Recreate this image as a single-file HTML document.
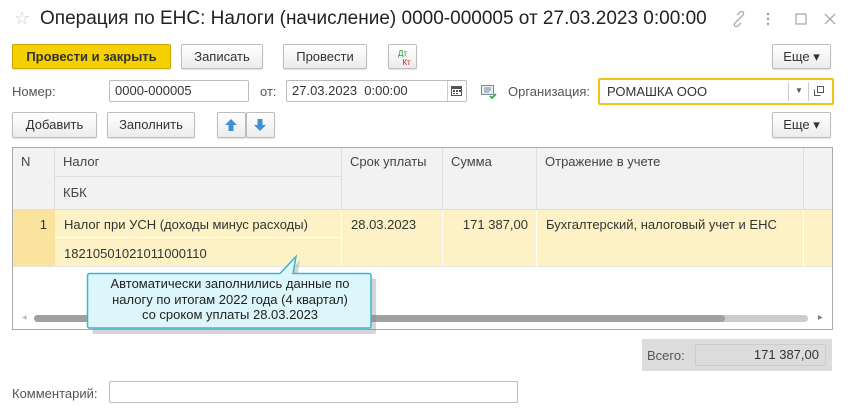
<!DOCTYPE html>
<html><head><meta charset="utf-8"><style>
*{box-sizing:border-box;margin:0;padding:0}
body{width:850px;height:413px;background:#fff;font-family:"Liberation Sans",Arial,sans-serif;font-size:13px;color:#333;position:relative;overflow:hidden}
.a{position:absolute}
.btn{position:absolute;height:25px;border:1px solid #bdbdbd;border-radius:2px;background:linear-gradient(#fff,#ececec);text-align:center;line-height:23px;color:#333;box-shadow:0 1px 1px rgba(0,0,0,.12)}
.inp{position:absolute;border:1px solid #bcbcbc;border-radius:2px;background:#fff;padding-left:5px;line-height:20px;color:#333}
.lbl{position:absolute;color:#555}
.th{position:absolute;background:#f2f2f2;color:#444;padding:6px 8px;border-right:1px solid #ddd}
</style></head><body>
<div class="a" style="left:14px;top:8px;font-size:18px;color:#ccc">☆</div>
<div class="a" style="left:40px;top:8px;font-size:19px;color:#222">Операция по ЕНС: Налоги (начисление) 0000-000005 от 27.03.2023 0:00:00</div>
<svg class="a" style="left:730px;top:11px" width="110" height="16"><g stroke="#aaa" fill="none" stroke-width="1.3"><path d="M8 9l-3 3a2 2 0 0 0 3 3l3-3M10 7l3-3a2 2 0 0 0-3-3l-3 3M7 10l4-4"/><rect x="66" y="3" width="10" height="10"/><path d="M95 3l10 10M105 3l-10 10"/></g><g fill="#999"><circle cx="38" cy="3" r="1.2"/><circle cx="38" cy="8" r="1.2"/><circle cx="38" cy="13" r="1.2"/></g></svg>

<div class="btn" style="left:12px;top:44px;width:159px;background:#f5d000;border-color:#c9a900;font-weight:bold;color:#333">Провести и закрыть</div>
<div class="btn" style="left:181px;top:44px;width:82px">Записать</div>
<div class="btn" style="left:283px;top:44px;width:84px">Провести</div>
<div class="btn" style="left:388px;top:44px;width:29px;font-size:8px;line-height:9px;padding-top:4px"><span style="color:#1a9a1a">Дт</span><br><span style="color:#d22;padding-left:8px">Кт</span></div>
<div class="btn" style="left:772px;top:44px;width:59px">Еще ▾</div>

<div class="lbl" style="left:12px;top:84px">Номер:</div>
<div class="inp" style="left:109px;top:80px;width:140px;height:22px">0000-000005</div>
<div class="lbl" style="left:260px;top:84px">от:</div>
<div class="inp" style="left:286px;top:80px;width:181px;height:22px">27.03.2023&nbsp; 0:00:00</div>
<div class="a" style="left:447px;top:81px;width:1px;height:20px;background:#ccc"></div>
<svg class="a" style="left:451px;top:86px" width="11" height="10"><rect x=".5" y=".5" width="10" height="9" fill="none" stroke="#555"/><rect x="0" y="0" width="11" height="3" fill="#555"/><g fill="#555"><rect x="2" y="4" width="2" height="2"/><rect x="5" y="4" width="2" height="2"/><rect x="8" y="4" width="2" height="2"/><rect x="2" y="7" width="2" height="1"/><rect x="5" y="7" width="2" height="1"/></g></svg>
<svg class="a" style="left:481px;top:85px" width="16" height="14"><rect x=".5" y=".5" width="12" height="9" fill="#e8eef2" stroke="#7a8a96"/><path d="M3 3h7M3 5h7M3 7h5" stroke="#7a8a96"/><path d="M9 11l2 2 4-4" stroke="#2a2" stroke-width="1.6" fill="none"/></svg>
<div class="lbl" style="left:508px;top:84px">Организация:</div>
<div class="inp" style="left:598px;top:78px;width:236px;height:27px;border:2px solid #f2c21a;line-height:23px;padding-left:7px">РОМАШКА ООО</div>
<div class="a" style="left:788px;top:82px;width:1px;height:19px;background:#ccc"></div>
<div class="a" style="left:808px;top:82px;width:1px;height:19px;background:#ccc"></div>
<div class="a" style="left:795px;top:86px;font-size:8px;color:#555">▼</div>
<svg class="a" style="left:814px;top:86px" width="10" height="10"><rect x="3.5" y=".5" width="6" height="6" fill="none" stroke="#555"/><path d="M.5 3.5v6h6" fill="none" stroke="#555"/></svg>

<div class="btn" style="left:12px;top:112px;width:85px;height:26px">Добавить</div>
<div class="btn" style="left:107px;top:112px;width:88px;height:26px">Заполнить</div>
<div class="btn" style="left:217px;top:112px;width:29px;height:26px"></div>
<div class="btn" style="left:246px;top:112px;width:29px;height:26px"></div>
<svg class="a" style="left:224px;top:118px" width="46" height="14"><path d="M7 1l6 6h-3.5v6h-5v-6H1z" fill="#3d8fd6"/><path d="M36 13l6-6h-3.5V1h-5v6H30z" fill="#3d8fd6"/></svg>
<div class="btn" style="left:772px;top:112px;width:59px;height:26px">Еще ▾</div>

<div class="a" style="left:12px;top:147px;width:821px;height:183px;border:1px solid #aaa;background:#fff"></div>
<div class="th" style="left:13px;top:148px;width:42px;height:61px">N</div>
<div class="th" style="left:55px;top:148px;width:287px;height:29px;border-bottom:1px solid #ddd">Налог</div>
<div class="th" style="left:55px;top:177px;width:287px;height:32px;padding-top:8px">КБК</div>
<div class="th" style="left:342px;top:148px;width:101px;height:61px">Срок уплаты</div>
<div class="th" style="left:443px;top:148px;width:94px;height:61px">Сумма</div>
<div class="th" style="left:537px;top:148px;width:267px;height:61px">Отражение в учете</div>
<div class="th" style="left:804px;top:148px;width:28px;height:61px;border:none"></div>
<div class="a" style="left:13px;top:209px;width:819px;height:1px;background:#ddd"></div>
<div class="a" style="left:13px;top:210px;width:42px;height:56px;background:#fae39c;text-align:right;padding:7px 8px">1</div>
<div class="a" style="left:55px;top:210px;width:777px;height:56px;background:#fdf1c6"></div>
<div class="a" style="left:55px;top:210px;width:287px;height:28px;border-right:1px solid #fff;border-bottom:1px solid #fff;padding:7px 9px">Налог при УСН (доходы минус расходы)</div>
<div class="a" style="left:55px;top:238px;width:287px;height:28px;border-right:1px solid #fff;padding:8px 9px">18210501021011000110</div>
<div class="a" style="left:342px;top:210px;width:101px;height:56px;border-right:1px solid #fff;padding:7px 9px">28.03.2023</div>
<div class="a" style="left:443px;top:210px;width:94px;height:56px;border-right:1px solid #fff;padding:7px 8px;text-align:right">171 387,00</div>
<div class="a" style="left:537px;top:210px;width:267px;height:56px;border-right:1px solid #fff;padding:7px 9px">Бухгалтерский, налоговый учет и ЕНС</div>
<div class="a" style="left:13px;top:266px;width:819px;height:1px;background:#e6e6e6"></div>
<div class="a" style="left:34px;top:315px;width:774px;height:7px;border-radius:4px;background:#ccc"></div>
<div class="a" style="left:34px;top:315px;width:691px;height:7px;border-radius:4px;background:#a0a0a0"></div>
<div class="a" style="left:22px;top:314px;font-size:6px;color:#bbb">◀</div>
<div class="a" style="left:818px;top:314px;font-size:6px;color:#777">▶</div>

<svg class="a" style="left:84px;top:254px" width="296" height="84"><path d="M8.5 22.5H199L214 4 211 22.5H288a2 2 0 0 1 2 2V76a2 2 0 0 1-2 2H8.5a2 2 0 0 1-2-2V24.5a2 2 0 0 1 2-2z" fill="#888" opacity=".35" transform="translate(2,2)"/><path d="M5.5 19.5H196L212 2.5 209 19.5H285a2 2 0 0 1 2 2V72a2 2 0 0 1-2 2H5.5a2 2 0 0 1-2-2V21.5a2 2 0 0 1 2-2z" fill="#dcf6fb" stroke="#3cb5cf" stroke-width="1.5"/></svg>
<div class="a" style="left:87px;top:276px;width:286px;text-align:center;font-size:13px;line-height:15.5px;color:#222">Автоматически заполнились данные по<br>налогу по итогам 2022 года (4 квартал)<br>со сроком уплаты 28.03.2023</div>

<div class="a" style="left:642px;top:339px;width:190px;height:32px;background:#dcdcdc"></div>
<div class="lbl" style="left:647px;top:348px">Всего:</div>
<div class="a" style="left:695px;top:344px;width:131px;height:22px;border:1px solid #ccc;border-radius:2px;text-align:right;padding-right:6px;line-height:20px">171 387,00</div>
<div class="lbl" style="left:12px;top:386px">Комментарий:</div>
<div class="inp" style="left:109px;top:381px;width:409px;height:22px"></div>
</body></html>
